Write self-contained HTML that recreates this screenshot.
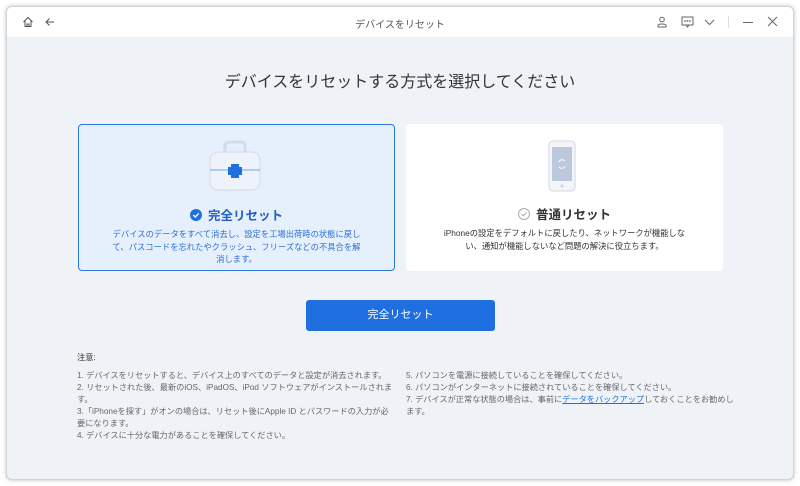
<!DOCTYPE html>
<html><head><meta charset="utf-8"><style>
*{margin:0;padding:0;box-sizing:border-box}
body{width:800px;height:486px;background:#fff;font-family:"Liberation Sans","Noto Sans CJK JP",sans-serif;position:relative;overflow:hidden}
.win{position:absolute;left:6px;top:6px;width:788px;height:474px;border:1px solid #cfd4da;border-radius:6px;background:#eff3f8;overflow:hidden;box-shadow:0 0 4px rgba(0,0,0,.25)}
.tb{position:absolute;left:0;top:0;width:100%;height:30px;background:#fff}
.tt{position:absolute;left:0;width:100%;top:9px;text-align:center;font-size:10px;color:#555}
.abs{position:absolute}
.h1{position:absolute;top:61px;width:100%;text-align:center;font-size:16px;color:#333;font-weight:400}
.card{position:absolute;top:117px;width:317px;height:147px;border-radius:4px;background:#fff}
.c1{left:71px;background:#e6f0fd;border:1.5px solid #2a78e4}
.c2{left:399px}
.ct{position:absolute;top:80px;width:100%;text-align:center;font-size:12.5px;font-weight:bold}
.cd{position:absolute;top:103px;left:20px;right:20px;text-align:center;font-size:8.3px;line-height:12.5px}
.btn{position:absolute;left:299px;top:293px;width:189px;height:31px;background:#1f6fe0;border-radius:3px;color:#fff;font-size:11px;text-align:center;line-height:31px}
.notes{position:absolute;top:345px;font-size:8.2px;color:#666;line-height:12px}
</style></head><body>
<div class="win">
<div class="tb">
<svg class="abs" style="left:15px;top:9px" width="12" height="12" viewBox="0 0 12 12" fill="none" stroke="#555" stroke-width="1"><path d="M1.5 6L6 1.5 10.5 6M3 5v5.5h6V5M5 10.5V8h2v2.5"/></svg>
<svg class="abs" style="left:37px;top:9px" width="12" height="12" viewBox="0 0 12 12" fill="none" stroke="#555" stroke-width="1"><path d="M10 6H2M5.5 2.5L2 6l3.5 3.5"/></svg>
<div class="tt">デバイスをリセット</div>
<svg class="abs" style="left:650px;top:9px" width="10" height="12" viewBox="0 0 10 12" fill="none" stroke="#666"><circle cx="5" cy="3.5" r="2.3"/><path d="M1 11V9.5c0-2 8-2 8 0V11z"/></svg>
<svg class="abs" style="left:674px;top:9px" width="13" height="12" viewBox="0 0 13 12" fill="none" stroke="#666"><rect x="1" y="1" width="11" height="8"/><path d="M5 9l1.5 2 1.5-2"/><circle cx="4" cy="5" r=".4"/><circle cx="6.5" cy="5" r=".4"/><circle cx="9" cy="5" r=".4"/></svg>
<svg class="abs" style="left:697px;top:10px" width="11" height="10" viewBox="0 0 11 10" fill="none" stroke="#666"><path d="M1 3l4.5 4.5L10 3"/></svg>
<div class="abs" style="left:721px;top:9px;width:1px;height:12px;background:#ddd"></div>
<div class="abs" style="left:736px;top:15px;width:10px;height:1px;background:#666"></div>
<svg class="abs" style="left:760px;top:9px" width="11" height="11" viewBox="0 0 11 11" stroke="#666"><path d="M1 1l9 9M10 1l-9 9"/></svg>
</div>
<div class="h1">デバイスをリセットする方式を選択してください</div>
<div class="card c1">
<svg class="abs" style="left:126px;top:15px" width="60" height="56" viewBox="0 0 60 56"><rect x="20" y="2" width="20" height="14" rx="4" fill="none" stroke="#d3dbe8" stroke-width="3"/><rect x="5" y="12" width="50" height="38" rx="8" fill="#eef3fb" stroke="#d3dbe8"/><path d="M5 30h50" stroke="#6aa3ef"/><rect x="26" y="24" width="8" height="14" fill="#1f6fe0"/><rect x="23" y="27" width="14" height="8" fill="#1f6fe0"/></svg>
<div class="ct" style="color:#1f5fc8"><svg width="12" height="12" viewBox="0 0 12 12" style="vertical-align:-1px;margin-right:6px"><circle cx="6" cy="6" r="6" fill="#1f6fe0"/><path d="M3.3 6l2 2 3.5-3.7" stroke="#fff" stroke-width="1.4" fill="none"/></svg>完全リセット</div>
<div class="cd" style="color:#2d6fd6;left:30px;right:30px">デバイスのデータをすべて消去し、設定を工場出荷時の状態に戻して、パスコードを忘れたやクラッシュ、フリーズなどの不具合を解消します。</div>
</div>
<div class="card c2">
<svg class="abs" style="left:138px;top:16px" width="40" height="62" viewBox="0 0 40 62"><rect x="5" y="1" width="26" height="50" rx="4" fill="#f3f5f9" stroke="#d0d7e3"/><rect x="8" y="7" width="20" height="34" fill="#bcc8dc"/><circle cx="18" cy="46" r="1.6" fill="#cdd5e2"/><path d="M15 22a3.5 3.5 0 0 1 6-1M21 26a3.5 3.5 0 0 1-6 1" stroke="#fff" fill="none"/></svg>
<div class="ct" style="color:#333"><svg width="12" height="12" viewBox="0 0 12 12" style="vertical-align:-1px;margin-right:6px"><circle cx="6" cy="6" r="5.5" fill="none" stroke="#aaa"/><path d="M3.5 6l1.8 1.8 3.2-3.3" stroke="#aaa" fill="none"/></svg>普通リセット</div>
<div class="cd" style="color:#333;left:34px;right:34px">iPhoneの設定をデフォルトに戻したり、ネットワークが機能しない、通知が機能しないなど問題の解決に役立ちます。</div>
</div>
<div class="btn">完全リセット</div>
<div class="notes" style="left:70px;width:318px"><div style="color:#333;margin-bottom:6px">注意:</div>1. デバイスをリセットすると、デバイス上のすべてのデータと設定が消去されます。<br>2. リセットされた後、最新のiOS、iPadOS、iPod ソフトウェアがインストールされます。<br>3.「iPhoneを探す」がオンの場合は、リセット後にApple ID とパスワードの入力が必要になります。<br>4. デバイスに十分な電力があることを確保してください。</div>
<div class="notes" style="left:399px;width:328px"><div style="margin-bottom:6px">&nbsp;</div>5. パソコンを電源に接続していることを確保してください。<br>6. パソコンがインターネットに接続されていることを確保してください。<br>7. デバイスが正常な状態の場合は、事前に<span style="color:#1f6fe0;text-decoration:underline">データをバックアップ</span>しておくことをお勧めします。</div>
</div>
</body></html>
